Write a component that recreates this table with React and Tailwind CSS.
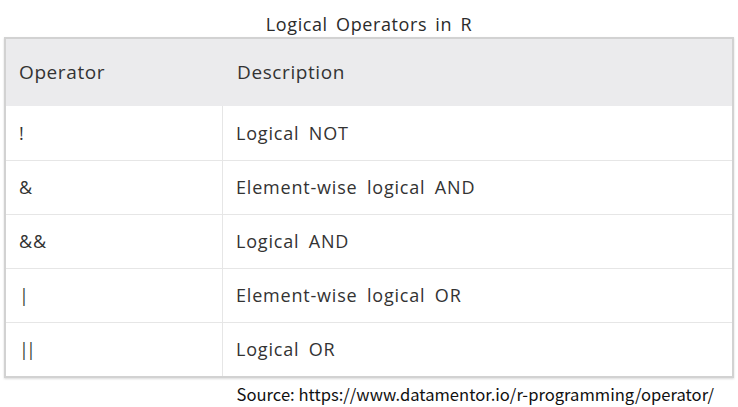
import React from 'react';

const rows = [
  { op: '!', desc: 'Logical NOT' },
  { op: '&', desc: 'Element-wise logical AND' },
  { op: '&&', desc: 'Logical AND' },
  { op: '|', desc: 'Element-wise logical OR', green: true },
  { op: '||', desc: 'Logical OR', green: true, tight: true },
];

export default function App() {
  return (
    <div className="w-[738px] h-[407px] bg-white overflow-hidden font-['Open_Sans',sans-serif] text-[#333]">
      <div className="h-[37px] flex items-end justify-center pb-[4px]">
        <h1 className="text-[18px] leading-none tracking-[0.6px] [word-spacing:3px] text-[#2b2b2b]">Logical Operators in R</h1>
      </div>
      <div className="mx-[4px] border-2 border-[#d2d2d2] shadow-[0_1px_2px_rgba(0,0,0,0.15)]">
        <div className="flex h-[67px] bg-[#ebebed] items-center text-[19px] tracking-[0.6px] [word-spacing:2px]">
          <div className="w-[217px] pl-[13px]">Operator</div>
          <div className="flex-1 pl-[14px]">Description</div>
        </div>
        {rows.map((r, i) => (
          <div key={i} className={`flex h-[54px] items-center text-[18px] tracking-[0.8px] [word-spacing:4px] ${i > 0 ? 'border-t border-[#e6e6e6]' : ''}`}>
            <div className={`w-[217px] h-full flex items-center pl-[13px] border-r border-[#e6e6e6] ${r.green ? 'text-[#3b4a3c]' : ''} ${r.tight ? 'tracking-[-3px]' : ''}`}>{r.op}</div>
            <div className="flex-1 pl-[13px]">{r.desc}</div>
          </div>
        ))}
      </div>
      <div className="flex justify-end pr-[24px] pt-[8px]">
        <p className="text-[16.6px] leading-none font-['Noto_Sans_CJK_KR',sans-serif] text-[#111]">
          Source: https://www.datamentor.io/r-programming/operator/
        </p>
      </div>
    </div>
  );
}
